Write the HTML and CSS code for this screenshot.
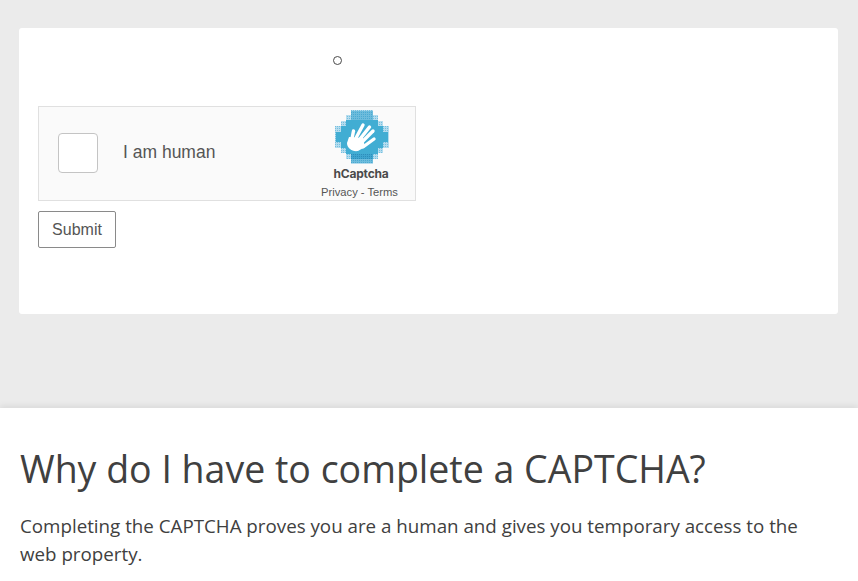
FILE: index.html
```html
<!DOCTYPE html>
<html lang="en">
<head>
<meta charset="utf-8">
<title>Why do I have to complete a CAPTCHA?</title>
<link rel="stylesheet" href="styles.css">
</head>
<body>
<main class="top">
  <form class="card">
    <div class="spinner-row"><span class="spinner"></span></div>
    <div class="captcha">
      <span class="check"></span>
      <span class="human">I am human</span>
      <div class="brand">
        <svg class="logo" viewBox="0 0 54 54" width="54" height="54" aria-hidden="true">
          <defs>
            <pattern id="dots" width="2" height="2" patternUnits="userSpaceOnUse">
              <rect width="2" height="2" fill="#6dbcdc"/>
              <rect width="1" height="1" fill="#4aa9d2"/>
            </pattern>
            <pattern id="pale" width="2" height="2" patternUnits="userSpaceOnUse">
              <rect width="2" height="2" fill="#b5dcee"/>
              <rect width="1" height="1" fill="#74bfdf"/>
            </pattern>
            <pattern id="deep" width="2" height="2" patternUnits="userSpaceOnUse">
              <rect width="2" height="2" fill="#3fa5cf"/>
              <rect width="1" height="1" fill="#2d8dba"/>
            </pattern>
          </defs>
          <path fill="url(#pale)" d="M16 0h22v5h5v6h5v5h6v22h-6v5h-5v6h-5v5H16v-5h-5v-6H6v-5H0V16h6v-5h5V5h5z"/>
          <path fill="url(#dots)" d="M16 1h22v9h-22zM16 44h22v9H16z"/>
          <path fill="#41add3" d="M6 16h5v-6h32v6h5v22h-5v6H11v-6H6z"/>
          <path fill="#41add3" d="M1 22h5v10H1zM48 22h5v10h-5z"/>
          <path fill="url(#deep)" d="M16 44h22v5H16z"/>
          <g fill="none" stroke="#fff" stroke-width="3.4" stroke-linecap="round">
            <path d="M16.5 31l2-10"/>
            <path d="M21 28l7-13"/>
            <path d="M25 29l9.500-12"/>
            <path d="M27 32l11-11"/>
            <path d="M28 37l11-8"/>
          </g>
          <path fill="#fff" d="M14 27l14 1 2 9-7 4c-6 1-11-3-11-8z"/>
        </svg>
        <span class="brand-name">hCaptcha</span>
        <span class="brand-links">Privacy - Terms</span>
      </div>
    </div>
    <button class="submit" type="button">Submit</button>
  </form>
</main>
<footer class="explain">
  <h1>Why do I have to complete a CAPTCHA?</h1>
  <p>Completing the CAPTCHA proves you are a human and gives you temporary access to the web property.</p>
</footer>
</body>
</html>
```

FILE: styles.css
```css
* { box-sizing: border-box; }
html, body { margin: 0; padding: 0; }
body {
  width: 858px;
  height: 581px;
  overflow: hidden;
  background: #fff;
  font-family: "Liberation Sans", Arial, sans-serif;
  color: #404040;
}
.top {
  height: 408px;
  padding: 28px 20px 0 19px;
  background: #ebebeb;
}
.card {
  height: 286px;
  padding: 28px 19px 0;
  background: #fff;
  border-radius: 3px;
}
.spinner-row {
  height: 50px;
  padding-left: 295px;
}
.spinner {
  display: block;
  width: 9px;
  height: 9px;
  border: 1px solid #4a4a4a;
  border-radius: 50%;
}
.captcha {
  display: flex;
  align-items: center;
  width: 378px;
  height: 95px;
  padding: 0 0 2px 19px;
  background: #fafafa;
  border: 1px solid #e0e0e0;
}
.check {
  width: 40px;
  height: 40px;
  background: #fff;
  border: 1px solid #c4c4c4;
  border-radius: 4px;
}
.human {
  margin-left: 25px;
  font-size: 17.5px;
  color: #555;
}
.brand {
  display: flex;
  flex-direction: column;
  align-items: center;
  width: 90px;
  margin-left: auto;
  margin-right: 8px;
  padding-top: 4px;
}
.logo { display: block; flex: none; }
.brand-name {
  margin: 2px 2px 0 0;
  font-family: "Inter", "Liberation Sans", sans-serif;
  font-size: 12px;
  line-height: 15px;
  font-weight: 700;
  letter-spacing: -0.2px;
  color: #4a4a4a;
}
.brand-links {
  margin: 5px 5px 0 0;
  font-size: 11.2px;
  line-height: 13px;
  color: #555;
  white-space: nowrap;
}
.submit {
  display: block;
  width: 78px;
  height: 37px;
  margin-top: 10px;
  padding: 0;
  background: #fff;
  border: 1px solid #8a8a8a;
  border-radius: 2px;
  font-family: "Liberation Sans", Arial, sans-serif;
  font-size: 16px;
  color: #555;
}
.explain {
  position: relative;
  height: 173px;
  padding: 37px 20px 0;
  background: #fff;
  box-shadow: 0 -2px 6px rgba(0, 0, 0, 0.08);
  font-family: "Open Sans", "Noto Sans", sans-serif;
  color: #404040;
}
.explain h1 {
  margin: 0;
  font-size: 37.5px;
  line-height: 48px;
  font-weight: 400;
}
.explain p {
  margin: 19px 0 0;
  font-size: 18.75px;
  line-height: 28px;
}
```
